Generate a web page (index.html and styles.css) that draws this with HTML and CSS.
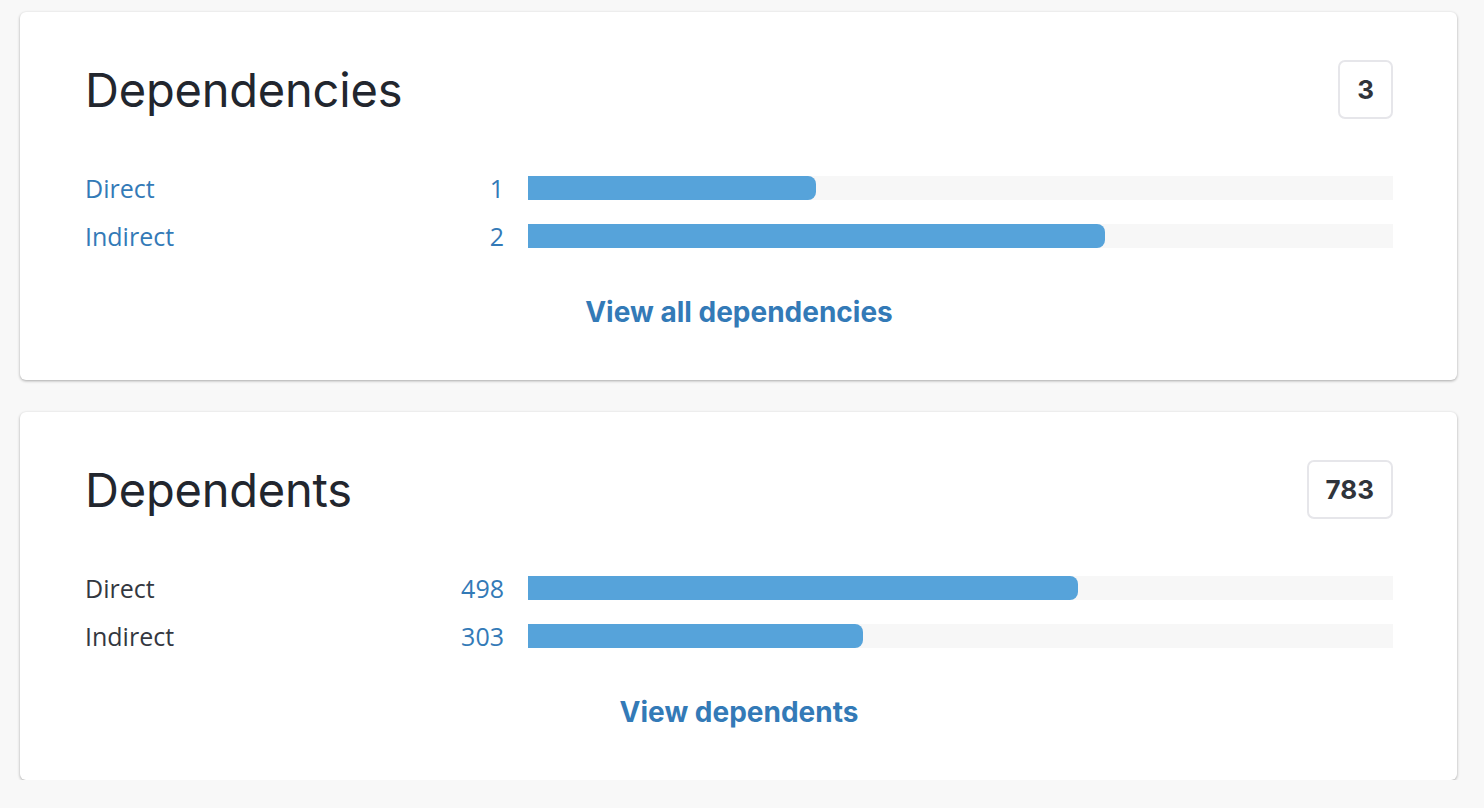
FILE: index.html
```html
<!DOCTYPE html>
<html>
<head>
<meta charset="utf-8">
<link rel="stylesheet" href="styles.css">
</head>
<body>
<main class="page">
  <section class="card">
    <header class="card-head">
      <h2 class="card-title">Dependencies</h2>
      <span class="badge">3</span>
    </header>
    <div class="rows">
      <div class="row">
        <a class="row-label link">Direct</a>
        <span class="row-num">1</span>
        <div class="track"><div class="fill" style="width:33.33%"></div></div>
      </div>
      <div class="row">
        <a class="row-label link">Indirect</a>
        <span class="row-num">2</span>
        <div class="track"><div class="fill" style="width:66.67%"></div></div>
      </div>
    </div>
    <div class="card-foot"><a class="view-link">View all dependencies</a></div>
  </section>
  <section class="card">
    <header class="card-head">
      <h2 class="card-title">Dependents</h2>
      <span class="badge">783</span>
    </header>
    <div class="rows">
      <div class="row">
        <span class="row-label">Direct</span>
        <span class="row-num">498</span>
        <div class="track"><div class="fill" style="width:63.6%"></div></div>
      </div>
      <div class="row">
        <span class="row-label">Indirect</span>
        <span class="row-num">303</span>
        <div class="track"><div class="fill" style="width:38.7%"></div></div>
      </div>
    </div>
    <div class="card-foot"><a class="view-link">View dependents</a></div>
  </section>
</main>
</body>
</html>
```
FILE: styles.css
```css
* { box-sizing: border-box; }
html, body { margin: 0; padding: 0; }
body {
  background: #f8f8f8;
  font-family: "Open Sans", "Noto Sans", sans-serif;
  color: #333740;
}
.page {
  padding: 12px 27px 0 20px;
  display: flex;
  flex-direction: column;
  gap: 32px;
}
.card {
  background: #fff;
  border-radius: 6px;
  box-shadow: 0 1px 3px rgba(0,0,0,0.33);
  padding: 48px 64px 53px 65px;
  height: 368px;
}
.card-head {
  display: flex;
  justify-content: space-between;
  align-items: center;
  height: 59px;
}
.card-title {
  margin: 0;
  font-family: "Inter", sans-serif;
  font-weight: 400;
  font-size: 47px;
  color: #22262e;
  letter-spacing: -0.2px;
}
.badge {
  display: inline-flex;
  align-items: center;
  justify-content: center;
  height: 59px;
  min-width: 54px;
  padding: 0 17px;
  border: 2px solid #e6e6ea;
  border-radius: 7px;
  font-family: "Inter", sans-serif;
  font-weight: 700;
  font-size: 26px;
  color: #30343b;
}
.rows {
  margin-top: 57px;
  display: flex;
  flex-direction: column;
  gap: 24px;
}
.row {
  display: flex;
  align-items: center;
  height: 24px;
  font-size: 25px;
  line-height: 24px;
}
.row-label {
  width: 355px;
  color: #333740;
}
.row-label.link { color: #337ab7; }
.row-num {
  width: 64px;
  text-align: right;
  color: #337ab7;
}
.track {
  flex: 1;
  margin-left: 24px;
  height: 24px;
  background: #f7f7f7;
}
.fill {
  height: 100%;
  background: #56a3da;
  border-radius: 0 8px 8px 0;
}
.card-foot {
  margin-top: 48px;
  text-align: center;
  line-height: 32px;
}
.view-link {
  font-family: "Inter", sans-serif;
  font-weight: 700;
  font-size: 28px;
  color: #337ab7;
}
```
